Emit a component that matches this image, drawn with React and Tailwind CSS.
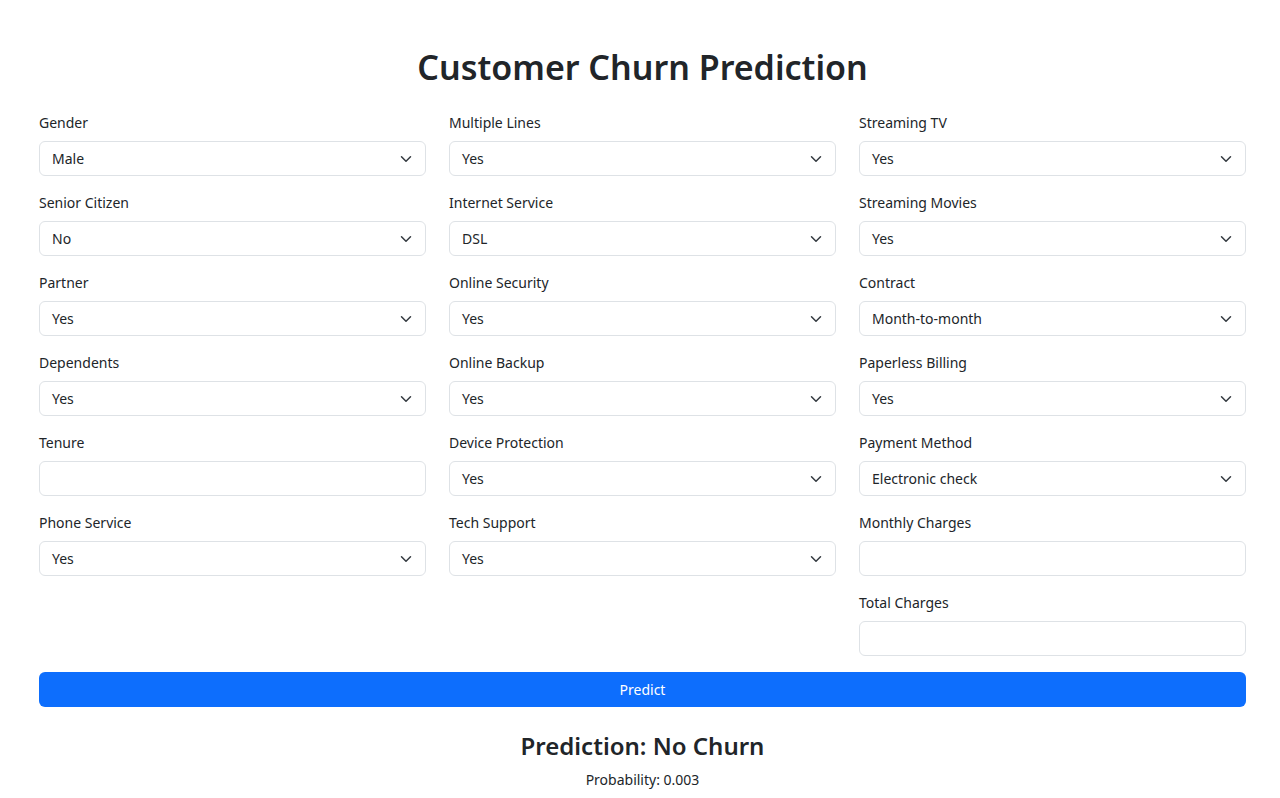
import React from 'react';

const Chevron = () => (
    <svg className="absolute right-[13px] top-1/2 -translate-y-1/2 w-[12px] h-[12px]" viewBox="0 0 16 16" fill="none">
        <path d="M2 5l6 6 6-6" stroke="#343a40" strokeWidth="2" strokeLinecap="round" strokeLinejoin="round" />
    </svg>
);

const Field = ({ label, value, input }) => (
    <div className="mb-[13px]">
        <label className="block text-[14px] leading-[24px] pt-[2px] mb-[6px] text-[#212529]">{label}</label>
        {input ? (
            <div className="h-[35px] rounded-[6px] border border-[#dee2e6] bg-white" />
        ) : (
            <div className="relative h-[35px] rounded-[6px] border border-[#dee2e6] bg-white flex items-center pl-[12px] text-[14px] text-[#212529]">
                {value}
                <Chevron />
            </div>
        )}
    </div>
);

const col1 = [
    { label: 'Gender', value: 'Male' },
    { label: 'Senior Citizen', value: 'No' },
    { label: 'Partner', value: 'Yes' },
    { label: 'Dependents', value: 'Yes' },
    { label: 'Tenure', input: true },
    { label: 'Phone Service', value: 'Yes' },
];

const col2 = [
    { label: 'Multiple Lines', value: 'Yes' },
    { label: 'Internet Service', value: 'DSL' },
    { label: 'Online Security', value: 'Yes' },
    { label: 'Online Backup', value: 'Yes' },
    { label: 'Device Protection', value: 'Yes' },
    { label: 'Tech Support', value: 'Yes' },
];

const col3 = [
    { label: 'Streaming TV', value: 'Yes' },
    { label: 'Streaming Movies', value: 'Yes' },
    { label: 'Contract', value: 'Month-to-month' },
    { label: 'Paperless Billing', value: 'Yes' },
    { label: 'Payment Method', value: 'Electronic check' },
    { label: 'Monthly Charges', input: true },
    { label: 'Total Charges', input: true },
];

export default function App() {
    return (
        <div className="min-h-[798px] bg-white pl-[39px] pr-[34px] pt-[45px] text-[#212529]" style={{ fontFamily: '"Noto Sans", "Open Sans", sans-serif' }}>
            <h1 className="text-center text-[34px] font-semibold leading-[44px] mb-[20px]">Customer Churn Prediction</h1>

            <div className="grid grid-cols-3 gap-x-[23px]">
                {[col1, col2, col3].map((col, i) => (
                    <div key={i}>
                        {col.map((f) => (
                            <Field key={f.label} {...f} />
                        ))}
                    </div>
                ))}
            </div>

            <button className="mt-[3px] w-full h-[35px] rounded-[6px] bg-[#0d6efd] text-white text-[14px]">Predict</button>

            <div className="text-center mt-[23px]">
                <h3 className="text-[24px] font-semibold leading-[32px]">Prediction: No Churn</h3>
                <p className="text-[14px] leading-[20px] mt-[8px]">Probability: 0.003</p>
            </div>
        </div>
    );
}
